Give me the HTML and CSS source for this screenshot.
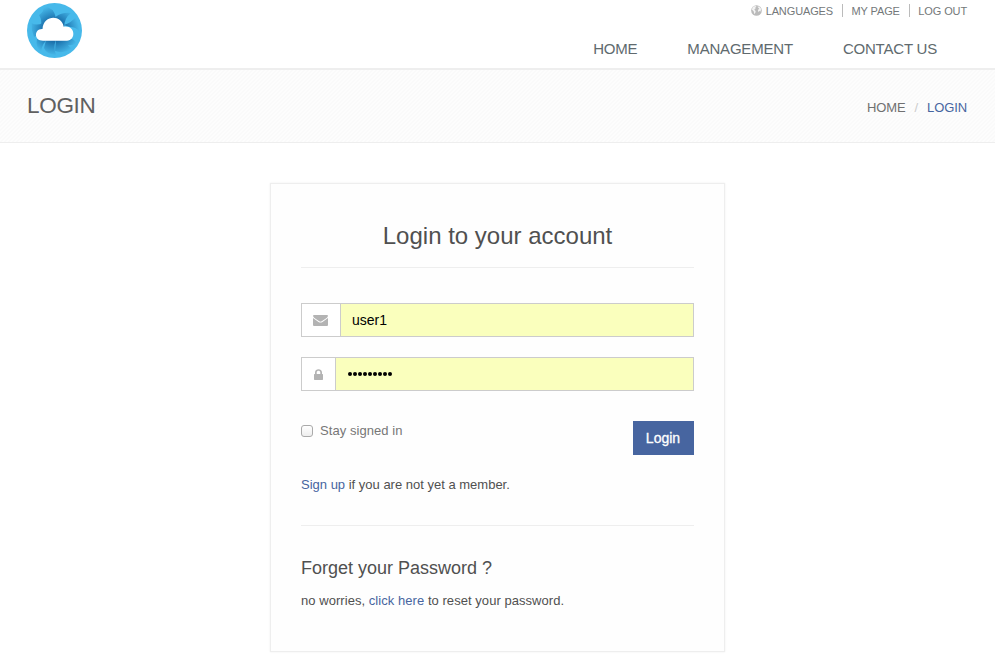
FILE: index.html
```html
<!DOCTYPE html>
<html lang="en">
<head>
<meta charset="utf-8">
<title>Login</title>
<link rel="stylesheet" href="styles.css">
</head>
<body>
<header class="header">
  <a class="logo" aria-label="Home">
    <svg width="55" height="55" viewBox="0 0 55 55">
      <defs>
        <radialGradient id="blade" gradientUnits="userSpaceOnUse" cx="27.500" cy="27.500" r="25">
          <stop offset=".35" stop-color="#14639f"/>
          <stop offset=".65" stop-color="#2b8cc4"/>
          <stop offset="1" stop-color="#47b9ea"/>
        </radialGradient>
      </defs>
      <circle cx="27.500" cy="27.500" r="27.500" fill="#47b9ea"/>
      <g fill="url(#blade)">
        <path d="M16 3Q27 4 29 15L27 22L14 22Q15 17 12 12Q18 8 16 3Z"/>
        <path d="M4.500 20Q9 23 16 20L20 26L7 34Q4 27 4.500 20Z"/>
        <path d="M28.500 14Q35 9 44 10Q37 15 37 25L30 22Z"/>
        <path d="M37 22Q45 19 49 14Q53 22 52 28Q49 24 43 24Z"/>
        <path d="M43 35Q48 37 50 40Q45 43 40 42L36 36Z"/>
        <path d="M29 37H38Q41 44 46 46Q36 51 28 48Z"/>
        <path d="M19 37H29Q26 44 29 52Q19 51 17 45Z"/>
        <path d="M10 36H21Q15 40 14 49Q8 44 10 36Z"/>
      </g>
      <path d="M16 37.700C6.500 37.700 7 25.500 15.500 26C16.500 11.500 34.500 11.500 36.700 23.700C49 22 49 37.700 40 37.700Z" fill="#fff"/>
    </svg>
  </a>
  <div class="menus">
    <nav class="toplinks">
      <a class="languages"><svg width="11" height="11" viewBox="0 0 12 12"><circle cx="6" cy="6" r="5.800" fill="#bbb"/><path d="M2 2L5 1L6 2L4.500 3L5 4L3.500 5L5 6.500L5 8L3.500 10L3 7L1 5ZM7 2L9 1.500L11 4L10.500 7L9 6.500L8 8L7.500 5.500L9 4Z" fill="#f3f3f3"/></svg>LANGUAGES</a>
      <a class="divided">MY PAGE</a>
      <a class="divided">LOG OUT</a>
    </nav>
    <nav class="mainnav">
      <a>HOME</a><a>MANAGEMENT</a><a>CONTACT US</a>
    </nav>
  </div>
</header>
<section class="crumbbar">
  <h1>LOGIN</h1>
  <div class="crumbs"><a>HOME</a><span>/</span><a class="current">LOGIN</a></div>
</section>
<main>
  <form class="card">
    <h2>Login to your account</h2>
    <div class="field">
      <span class="addon mail"><svg width="15" height="11" viewBox="0 0 15 11"><path d="M0 1Q0 0 1 0H14Q15 0 15 1Q14.500 2.400 12.500 3.800L8.700 6.300Q7.500 7 6.300 6.300L2.500 3.800Q.5 2.400 0 1ZM0 3L5.500 6.900Q7.500 8.300 9.500 6.900L15 3V10Q15 11 14 11H1Q0 11 0 10Z" fill="#b3b3b3"/></svg></span>
      <input type="text" value="user1" aria-label="User">
    </div>
    <div class="field">
      <span class="addon lock"><svg width="9" height="11" viewBox="0 0 9 11"><path d="M1 5V3.500C1-.8 8-.8 8 3.500V5H8.400Q9 5 9 5.600V10.300Q9 11 8.400 11H.6Q0 11 0 10.300V5.600Q0 5 .6 5ZM2.700 5H6.300V3.500C6.300 1.100 2.700 1.100 2.700 3.500Z" fill="#b3b3b3"/></svg></span>
      <div class="password" role="textbox" aria-label="Password"><i></i><i></i><i></i><i></i><i></i><i></i><i></i><i></i><i></i></div>
    </div>
    <div class="actions">
      <label><input type="checkbox"><span>Stay signed in</span></label>
      <button type="button">Login</button>
    </div>
    <p class="signup"><a>Sign up</a> if you are not yet a member.</p>
    <hr>
    <h3>Forget your Password ?</h3>
    <p class="reset">no worries, <a>click here</a> to reset your password.</p>
  </form>
</main>
</body>
</html>
```
FILE: styles.css
```css
* { box-sizing: border-box; }
body { margin: 0; height: 655px; overflow: hidden; background: #fff; color: #505050; font: 13px/20px "Liberation Sans", Arial, sans-serif; }
h1, h2, h3, p { margin: 0; font-weight: 400; }
.header { height: 70px; border-bottom: 2px solid #eee; display: flex; justify-content: space-between; }
.logo { margin: 3px 0 0 27px; height: 55px; }
.logo svg { display: block; }
.menus { display: flex; flex-direction: column; align-items: flex-end; }
.toplinks { display: flex; margin: 4px 28px 0 0; height: 13px; font-size: 11px; line-height: 14px; color: #74787a; letter-spacing: -.12px; }
.languages { display: flex; gap: 4px; }
.languages svg { margin-top: 1px; }
.divided { margin-left: 9px; padding-left: 8.5px; border-left: 1px solid #bbb; }
.mainnav { display: flex; gap: 50px; margin: 22px 58px 0 0; font-size: 15px; line-height: 20px; color: #606a6e; letter-spacing: -.2px; }
.crumbbar { height: 73px; padding: 0 28px 0 27px; border-bottom: 1px solid #eee; display: flex; justify-content: space-between; background: repeating-linear-gradient(135deg, #fafafa 0 1.400px, #fdfdfd 1.400px 2.828px); }
h1 { margin-top: 20px; font-size: 22.5px; line-height: 31px; letter-spacing: -.3px; color: #606060; }
.crumbs { display: flex; margin-top: 28px; color: #707070; letter-spacing: -.1px; }
.crumbs span { margin: 0 9px; color: #ccc; }
a.current, p a { color: #4765a0; }
.card { width: 455px; height: 469px; margin: 40px 0 0 270px; padding: 34px 30px 0; border: 1px solid #eee; background: #fefefe; box-shadow: 0 0 2px #eee; }
h2 { height: 50px; margin-bottom: 35px; border-bottom: 1px solid #eee; text-align: center; font-size: 24px; line-height: 35px; }
.field { display: flex; height: 34px; margin-bottom: 20px; border: 1px solid #ccc; }
.addon { display: flex; align-items: center; justify-content: center; border-right: 1px solid #ccc; background: #fff; }
.mail { width: 39px; padding-right: 1px; }
.lock { width: 34px; padding-right: 1px; }
.field input, .password { flex: 1; border: 0; padding: 0 11px; background: #faffbd; color: #000; font: 14px "Liberation Sans", Arial, sans-serif; outline: 0; }
.password { display: flex; align-items: center; gap: 1px; padding-left: 12px; }
.password i { width: 4px; height: 4px; border-radius: 50%; background: #000; }
.actions { display: flex; justify-content: space-between; margin-top: 30px; height: 34px; }
label { display: flex; height: 20px; align-items: center; gap: 7px; color: #777; letter-spacing: .06px; }
label input { appearance: none; width: 12px; height: 12px; margin: 0; border: 1px solid #aaa; border-radius: 3px; background: linear-gradient(#fff, #eee); }
button { width: 61px; border: 0; padding: 0 1px 0 0; color: #fff; background: #4765a0; font: 14px/34px "Liberation Sans", Arial, sans-serif; -webkit-text-stroke: .3px #fff; }
.signup { margin-top: 20px; }
hr { height: 1px; margin: 30px 0; border: 0; background: #eee; }
h3 { font-size: 18px; line-height: 24px; }
.reset { margin-top: 11px; letter-spacing: .05px; }
```
